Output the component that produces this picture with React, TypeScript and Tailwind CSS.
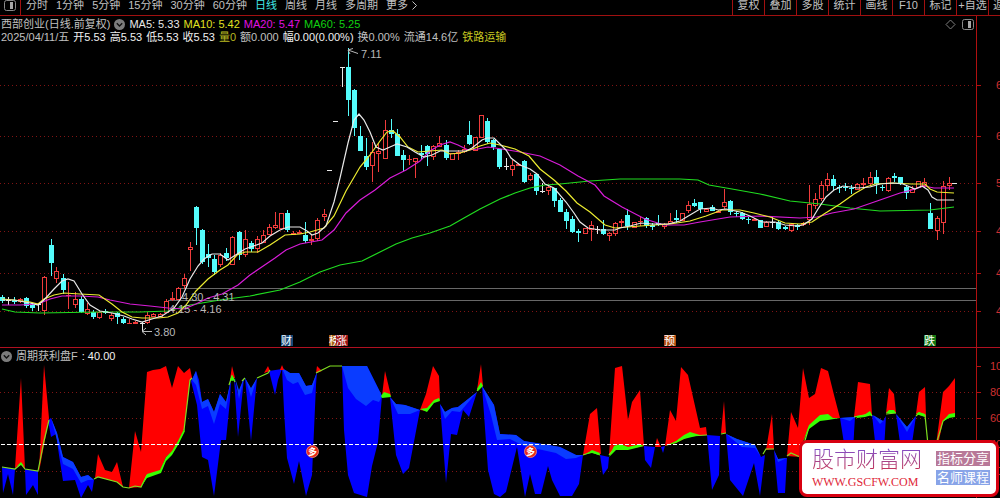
import React from "react";

type Kind = "u" | "d" | "w";
// x, high, body top, body bottom, low, kind (u = rise, d = fall, w = flat)
type Candle = [number, number, number, number, number, Kind];

const candles: Candle[] = [
  [2, 295, 297, 301, 303, "d"], [8, 297, 300, 301, 305, "w"], [14, 297, 300, 302, 304, "d"], [20, 298, 299, 302, 303, "u"],
  [26, 297, 298, 306, 308, "d"], [32, 303, 305, 308, 311, "d"], [38, 303, 304, 305, 311, "w"], [44, 276, 277, 311, 315, "u"],
  [51, 239, 245, 263, 276, "d"], [56, 267, 271, 279, 283, "u"], [63, 274, 278, 290, 294, "d"], [68, 282, 295, 296, 309, "u"],
  [75, 292, 299, 305, 308, "u"], [81, 296, 299, 312, 313, "d"], [87, 303, 309, 314, 315, "u"], [93, 310, 312, 317, 319, "d"],
  [99, 311, 312, 318, 319, "u"], [105, 309, 311, 313, 314, "d"], [111, 313, 315, 319, 321, "u"], [117, 312, 313, 317, 324, "d"],
  [123, 317, 319, 323, 324, "d"], [129, 319, 323, 324, 324, "u"], [135, 321, 322, 324, 324, "u"], [142, 322, 323, 324, 332, "w"],
  [147, 312, 315, 323, 324, "u"], [153, 313, 314, 317, 317, "u"], [160, 313, 314, 317, 317, "u"], [166, 299, 301, 313, 313, "u"],
  [172, 292, 298, 300, 301, "u"], [178, 287, 288, 300, 300, "u"], [184, 274, 278, 286, 289, "u"], [190, 242, 247, 250, 271, "u"],
  [196, 206, 207, 228, 245, "d"], [202, 229, 230, 262, 264, "d"], [208, 244, 254, 258, 267, "d"], [214, 255, 259, 272, 275, "d"],
  [220, 253, 255, 265, 267, "u"], [226, 248, 253, 258, 261, "d"], [232, 236, 237, 265, 265, "u"], [239, 231, 232, 255, 260, "d"],
  [245, 230, 239, 255, 257, "u"], [251, 241, 243, 249, 252, "d"], [257, 236, 239, 249, 253, "u"], [263, 230, 235, 243, 243, "u"],
  [269, 224, 227, 235, 235, "u"], [275, 212, 225, 228, 229, "u"], [281, 213, 213, 229, 229, "u"], [287, 210, 213, 230, 232, "d"],
  [293, 231, 233, 235, 235, "u"], [299, 230, 232, 234, 234, "u"], [305, 222, 235, 241, 243, "d"], [311, 235, 239, 241, 245, "u"],
  [317, 218, 220, 239, 241, "u"], [324, 209, 214, 217, 221, "u"], [329, 170, 170, 171, 171, "w"], [335, 121, 121, 122, 122, "w"],
  [342, 67, 67, 68, 87, "w"], [348, 48, 67, 100, 116, "d"], [354, 89, 90, 128, 136, "d"], [360, 126, 136, 151, 151, "d"],
  [366, 138, 156, 167, 170, "d"], [372, 142, 152, 166, 182, "u"], [378, 143, 151, 154, 172, "u"], [385, 120, 130, 159, 159, "u"],
  [391, 119, 130, 134, 138, "d"], [397, 129, 134, 156, 156, "d"], [403, 150, 155, 160, 171, "d"], [409, 155, 159, 160, 165, "u"],
  [415, 158, 158, 162, 178, "u"], [421, 145, 153, 155, 160, "d"], [427, 145, 146, 154, 166, "d"], [433, 145, 146, 157, 160, "u"],
  [439, 136, 143, 147, 147, "u"], [446, 140, 145, 158, 160, "d"], [452, 153, 153, 160, 160, "u"], [458, 150, 152, 154, 160, "u"],
  [464, 145, 149, 152, 153, "u"], [469, 121, 135, 144, 145, "d"], [475, 137, 137, 151, 151, "u"], [481, 115, 115, 138, 138, "u"],
  [487, 118, 121, 142, 144, "d"], [493, 139, 140, 147, 150, "d"], [499, 149, 149, 167, 169, "d"], [506, 158, 166, 167, 170, "w"],
  [512, 160, 165, 170, 176, "u"], [518, 163, 164, 166, 166, "u"], [524, 160, 161, 182, 183, "d"], [530, 173, 175, 180, 181, "u"],
  [536, 174, 174, 191, 195, "d"], [542, 183, 191, 192, 193, "w"], [548, 186, 187, 191, 195, "u"], [554, 188, 188, 201, 207, "d"],
  [560, 198, 200, 212, 212, "d"], [566, 209, 212, 221, 229, "d"], [572, 216, 219, 232, 233, "d"], [578, 229, 231, 233, 242, "d"],
  [585, 228, 228, 234, 234, "u"], [591, 221, 225, 230, 241, "u"], [597, 226, 229, 230, 234, "w"], [603, 220, 229, 234, 235, "d"],
  [609, 232, 233, 236, 241, "u"], [615, 222, 223, 234, 236, "u"], [621, 219, 221, 223, 228, "u"], [627, 209, 215, 226, 230, "d"],
  [634, 222, 222, 228, 228, "u"], [640, 217, 221, 222, 226, "u"], [646, 217, 218, 226, 228, "d"], [652, 223, 225, 227, 230, "d"],
  [658, 215, 223, 225, 226, "d"], [664, 223, 224, 227, 229, "u"], [670, 213, 221, 224, 224, "u"], [676, 210, 218, 220, 223, "d"],
  [682, 213, 213, 221, 221, "u"], [688, 201, 205, 211, 213, "u"], [694, 199, 203, 206, 207, "d"], [700, 202, 202, 209, 213, "d"],
  [706, 208, 209, 212, 212, "u"], [712, 205, 207, 211, 211, "d"], [718, 210, 211, 213, 213, "u"], [724, 189, 202, 207, 209, "u"],
  [730, 200, 201, 212, 215, "d"], [736, 211, 213, 214, 217, "d"], [742, 212, 213, 219, 220, "d"], [748, 217, 219, 220, 224, "d"],
  [754, 218, 219, 221, 221, "u"], [760, 220, 220, 228, 228, "d"], [766, 221, 222, 227, 227, "u"], [772, 217, 222, 223, 228, "w"],
  [778, 220, 222, 229, 230, "d"], [785, 226, 227, 229, 230, "d"], [791, 223, 224, 231, 232, "u"], [797, 224, 225, 227, 230, "d"],
  [803, 222, 223, 225, 226, "u"], [809, 185, 204, 220, 225, "u"], [815, 193, 199, 206, 209, "u"], [821, 181, 185, 199, 201, "u"],
  [827, 173, 179, 186, 191, "u"], [833, 175, 179, 186, 191, "d"], [839, 185, 187, 188, 193, "d"], [845, 183, 187, 188, 191, "d"],
  [851, 185, 188, 189, 194, "d"], [857, 183, 184, 190, 190, "u"], [863, 178, 183, 185, 189, "u"], [870, 172, 177, 184, 185, "u"],
  [876, 170, 177, 184, 194, "d"], [882, 185, 187, 188, 191, "d"], [888, 177, 178, 191, 192, "u"], [894, 173, 176, 178, 182, "d"],
  [900, 177, 177, 184, 185, "d"], [906, 186, 187, 193, 199, "d"], [912, 186, 189, 193, 193, "u"], [918, 181, 181, 188, 188, "u"],
  [924, 178, 182, 186, 187, "u"], [930, 203, 213, 229, 229, "d"], [937, 216, 218, 231, 240, "u"], [943, 181, 186, 223, 234, "u"],
  [949, 177, 183, 186, 190, "u"], [954, 183, 183, 184, 184, "w"],
];

const averages = [
  {
    color: "#20dc20",
    points:
      "2,309 15,312 40,313 100,312 140,312 168,311 190,305 220,300 250,296 280,290 300,282 320,272 340,265 362,261 380,252 396,244 412,238 430,233 450,226 464,218 480,209 500,199 515,193 530,188 545,185 560,184 590,181 620,179 680,179 698,180 709,185 732,189 760,194 790,201 820,204 850,208 880,211 930,210 954,207",
  },
  {
    color: "#d81cd8",
    points:
      "2,305 20,305 38,304 50,299 62,296 80,296 98,297 110,300 130,304 150,306 168,308 184,309 196,304 208,298 222,294 238,285 250,275 275,258 286,250 300,244 322,240 334,230 346,213 360,200 375,190 390,178 406,170 420,161 430,151 440,145 450,142 458,145 468,150 478,149 488,147 502,149 520,152 540,156 560,165 578,176 595,185 604,196 622,207 645,219 664,225 684,225 700,222 730,217 760,216 800,218 817,217 832,213 854,209 880,200 900,193 912,190 924,186 934,188 954,188",
  },
  {
    color: "#ecec30",
    points:
      "2,299 14,300 30,302 38,304 44,299 54,295 64,293 80,294 99,295 112,304 122,312 132,317 142,318 158,318 168,317 178,313 186,305 196,291 208,279 220,270 228,265 237,255 245,252 258,252 270,245 285,235 300,234 310,232 324,228 334,216 346,191 360,167 370,155 380,141 387,132 393,131 400,137 408,147 418,152 430,151 442,150 450,154 460,153 470,150 480,146 490,143 500,145 515,149 529,156 540,169 554,180 566,191 577,203 590,212 605,225 615,228 640,226 670,224 690,221 706,216 722,210 740,210 754,213 770,217 785,223 800,224 812,222 824,214 840,204 854,194 866,187 875,184 893,183 912,184 925,184 930,189 937,192 954,193",
  },
  {
    color: "#e8e8e8",
    points:
      "2,300 14,300 30,303 38,305 44,300 54,289 62,281 68,279 74,281 82,294 90,305 100,311 112,313 124,316 132,319 142,322 152,319 162,316 168,312 174,308 182,297 190,279 198,266 204,259 212,254 220,254 228,260 234,256 245,249 262,243 270,236 280,230 288,227 300,227 307,231 312,235 318,233 326,226 334,202 340,178 348,143 354,120 359,114 364,120 370,132 376,147 383,150 390,147 397,144 407,147 415,152 424,157 432,155 440,151 450,151 466,151 472,148 482,140 487,138 494,138 506,150 511,158 520,165 530,169 537,174 545,184 554,188 566,202 574,213 580,222 588,228 600,230 615,230 620,228 630,226 641,223 652,224 668,224 680,221 690,215 700,209 712,208 718,210 726,209 740,212 750,216 762,222 775,222 785,225 797,226 803,225 812,219 818,209 826,197 834,190 843,186 858,188 870,187 880,184 893,183 903,184 915,189 922,186 928,190 932,197 937,200 954,200",
  },
];

const redAreas = [
  "15,468 21,378 25,469 21,464",
  "39,472 44,365 49,418 44,445",
  "95,478 98,454 105,470 112,472 117,462 123,487 117,482 98,477",
  "129,488 135,431 141,452 147,372 153,370 160,369 166,366 172,388 178,366 184,373 190,368 192,378 190,380 184,430 178,442 172,452 166,457 160,471 147,475 141,487",
  "230,380 232,366 235,378",
  "264,373 268,366 270,371",
  "280,370 282,365 284,370",
  "316,373 317,366 322,371",
  "382,396 385,371 391,396",
  "420,410 426,394 433,366 439,376 440,400 434,402 427,411",
  "477,390 481,364 483,386",
  "583,455 590,414 597,408 601,454 592,452",
  "609,455 615,368 622,366 628,420 632,402 640,390 644,446 628,449 618,447",
  "655,447 657,438 661,447",
  "665,446 670,410 676,421 681,367 688,375 700,428 706,427 707,435 690,436 676,443",
  "721,433 724,401 726,433",
  "766,450 772,414 774,449",
  "787,456 791,412 798,428 803,368 809,398 815,394 821,368 828,371 834,395 840,418 828,418 820,420 809,427 803,442 800,457",
  "854,417 858,382 864,383 870,384 872,415 862,416",
  "886,413 889,388 894,394 896,413",
  "916,414 919,392 925,387 926,417",
  "936,445 943,392 949,386 955,378 955,415 949,416 943,421 938,445",
];

const blueAreas = [
  "2,467 15,469 13,495 8,474 3,493",
  "25,469 38,471 38,495 33,485 26,495",
  "48,420 51,418 57,433 63,457 73,462 81,477 88,475 94,480 92,492 88,485 81,498 75,480 63,481 59,455 56,434 51,437",
  "191,381 196,371 199,380 202,402 208,399 214,412 220,394 226,402 231,380 230,400 226,440 221,440 214,496 208,460 202,457 197,405",
  "234,378 238,394 244,378 238,437",
  "245,378 251,389 257,378 251,441",
  "269,371 282,369 278,380 275,395",
  "282,368 290,373 299,373 306,386 312,385 317,372 316,385 314,430 312,475 306,496 299,461 294,484 287,458 284,410",
  "342,366 367,366 382,396 378,442 372,466 367,497 354,493 348,475 344,430",
  "390,397 396,404 405,405 420,410 409,468 403,474 396,455",
  "440,404 445,412 452,408 458,407 477,392 469,417 463,410 457,435 451,434 446,483",
  "482,386 494,405 500,434 516,435 524,441 560,447 576,455 583,455 579,484 572,496 560,496 552,480 548,466 541,494 535,494 530,474 525,497 517,447 506,492 500,497 494,494 488,470",
  "600,455 609,457 608,468 603,475",
  "644,446 655,447 651,468 645,460",
  "661,447 665,446 663,453",
  "707,435 720,436 719,475 712,490",
  "726,434 737,439 755,445 761,457 765,455 760,496 754,463 743,496 730,480",
  "774,450 778,459 787,458 785,493 778,493",
  "840,418 855,417 853,450 845,450",
  "872,415 883,421 886,416 884,450 876,450",
  "896,414 907,427 916,416 911,450 901,450",
];

const lightAreas = [
  "51,418 57,433 63,457 73,462 81,477 88,475 94,480 88,480 81,483 73,469 63,464 57,440",
  "192,380 196,371 202,402 208,399 214,412 220,394 226,402 231,380 226,409 220,404 214,424 208,406 202,409 196,385",
  "235,378 239,390 244,378 239,399",
  "245,378 251,388 257,378 251,397",
  "282,368 290,373 299,373 306,386 312,385 317,372 312,393 305,395 298,382 293,384 287,380",
  "342,366 367,366 382,396 379,402 373,400 366,406 356,399 348,388",
  "390,397 396,404 405,405 420,410 410,414 398,414",
  "440,404 445,412 452,408 458,407 477,392 460,412 452,411 445,419",
  "482,386 494,405 500,434 516,435 524,441 560,447 576,455 583,455 576,458 566,459 556,453 524,446 510,439 497,440 491,415",
  "726,434 737,439 755,445 761,457 755,448 742,447",
  "774,450 778,459 787,458 778,462",
  "840,418 855,417 850,421",
  "873,415 883,421 880,424",
  "896,414 907,427 916,416 907,432",
];

const thinLines = [
  "2,467 15,469 21,464 25,469 38,471 44,441 49,420",
  "94,479 98,477 117,482 123,487 129,488 135,486 141,487 147,475",
  "184,430 190,380 192,378",
  "229,385 232,376 235,382",
  "242,381 245,378",
  "257,378 268,373 270,370",
  "316,373 322,370 330,366 342,366",
  "477,391 481,386",
  "583,455 592,452 600,455",
  "609,455 614,449",
  "690,436 707,435",
  "721,434 726,433",
  "763,454 766,449 774,449",
  "787,456 791,453 800,457",
  "800,457 809,427",
  "854,417 870,414 872,416",
  "886,414 896,413",
  "916,416 919,413 925,415 928,445",
  "936,445 943,421 949,416",
];

const thickAreas = [
  "17,466 21,462 24,466 21,465",
  "141,487 147,474 160,470 166,457 172,451 178,441 184,429 185,431 178,445 172,455 166,461 161,473 147,478",
  "230,380 232,375 235,380 232,381",
  "381,396 384,392 390,394 391,397 382,398",
  "420,409 427,408 434,400 439,398 440,401 434,403 427,412",
  "477,389 481,382 483,386 478,391",
  "586,454 592,450 600,453 599,455 592,453",
  "609,457 614,446 620,444 628,447 640,444 644,446 628,450 616,450",
  "665,446 676,441 684,435 690,432 700,435 692,437 684,439 676,443",
  "803,442 809,425 820,415 828,414 833,418 840,418 828,420 820,421 809,429",
  "856,416 864,415 870,411 872,415 865,417 857,418",
  "886,413 889,410 894,410 896,413",
  "916,414 919,412 925,414 925,417 919,415",
  "942,422 949,414 955,413 955,417 949,418",
];

const periods = ["分时", "1分钟", "5分钟", "15分钟", "30分钟", "60分钟", "日线", "周线", "月线", "多周期"];
const tools = ["复权", "叠加", "多股", "统计", "画线", "F10", "标记", "+自选"];

const priceAxis: [number, string][] = [[85, "6"], [136, "6"], [183, "5"], [231, "4"], [273, "4"], [311, "4"]];
const levelAxis: [number, string][] = [[366, "100"], [392, "80"], [418, "60"], [444, "40"], [471, "20"]];

const tags = [
  { x: 281, text: "财", fill: "#184878" },
  { x: 329, text: "榜", fill: "#a85c10" },
  { x: 336, text: "涨", fill: "#a01414" },
  { x: 664, text: "预", fill: "#b04c10" },
  { x: 924, text: "跌", fill: "#147814" },
];

function PanelIcon() {
  return (
    <svg width="12" height="11" viewBox="0 0 12 11" aria-hidden="true" className="shrink-0">
      <rect x="0.5" y="0.5" width="11" height="10" rx="2" fill="none" stroke="#8a8a8a" />
      <rect x="6" y="2" width="3" height="7" fill="#a8a8a8" />
    </svg>
  );
}

function DropIcon() {
  return (
    <svg width="11" height="11" viewBox="0 0 11 11" aria-hidden="true">
      <circle cx="5.5" cy="5.5" r="5.5" fill="#7c7c7c" />
      <path d="M2.8 4.3 5.5 7 8.2 4.3" fill="none" stroke="#111" strokeWidth="1.4" />
    </svg>
  );
}

function CandleMark({ candle }: { candle: Candle }) {
  const [x, high, top, bottom, low, kind] = candle;
  const color = kind === "u" ? "#f03c3c" : kind === "d" ? "#54fcfc" : "#e8e8e8";
  const h = Math.max(bottom - top, 1);
  return (
    <g fill={color}>
      <rect x={x} y={high} width="1" height={Math.max(top - high, 0)} />
      <rect x={x} y={bottom} width="1" height={Math.max(low - bottom, 0)} />
      {kind === "u" && h > 1 ? (
        <rect x={x - 1.5} y={top + 0.5} width="4" height={h - 1} fill="none" stroke={color} />
      ) : (
        <rect x={x - 2} y={top} width="5" height={h} />
      )}
    </g>
  );
}

function Axis({ top, bottom, labels, x }: { top: number; bottom: number; labels: [number, string][]; x: number }) {
  return (
    <g>
      <rect x="976" y={top} width="1" height={bottom - top} fill="#b01010" />
      {labels.map(([y, text]) => (
        <g key={y}>
          <rect x="977" y={y} width="4" height="1" fill="#b01010" />
          <text x={x} y={y + 4} fontSize="11" fill="#d03030">{text}</text>
        </g>
      ))}
    </g>
  );
}

function PriceChart() {
  return (
    <svg viewBox="0 16 1000 331" className="col-start-1 row-start-1 block w-full" role="img" aria-label="日线">
      {priceAxis.map(([y]) => (
        <line key={y} x1="0" x2="976" y1={y + 0.5} y2={y + 0.5} stroke="#801414" strokeDasharray="1 3" />
      ))}
      <rect x="178" y="288" width="798" height="1" fill="#686868" />
      <rect x="168" y="300" width="808" height="1" fill="#686868" />
      {candles.map((c) => <CandleMark key={c[0]} candle={c} />)}
      {averages.map((a) => (
        <polyline key={a.color} points={a.points} fill="none" stroke={a.color} strokeWidth="1.2" />
      ))}
      <g fontSize="11" fill="#b8b8b8">
        <text x="182" y="301">4.30 - 4.31</text>
        <text x="169" y="313">4.15 - 4.16</text>
        <text x="154" y="336">3.80</text>
        <text x="361" y="58">7.11</text>
      </g>
      <path d="M142 331.5h10M146 328l-4 3.5 4 3.5M348 50l10 3.5M353 48.500l-5 1.500 2 4" fill="none" stroke="#b8b8b8" />
      {tags.map((t) => (
        <g key={t.text}>
          <rect x={t.x} y="335" width="12" height="11" fill={t.fill} />
          <text x={t.x} y="345" fontSize="11" fill="#fff">{t.text}</text>
        </g>
      ))}
      <Axis top={16} bottom={347} labels={priceAxis} x={996} />
    </svg>
  );
}

function ProfitChart() {
  return (
    <svg viewBox="0 348 1000 150" className="col-start-1 row-start-1 block w-full" role="img" aria-label="周期获利盘">
      {[392, 418, 471].map((y) => (
        <line key={y} x1="0" x2="976" y1={y + 0.5} y2={y + 0.5} stroke="#801414" strokeDasharray="1 3" />
      ))}
      {blueAreas.map((p) => <polygon key={p} points={p} fill="#0000ff" />)}
      {lightAreas.map((p) => <polygon key={p} points={p} fill="#0a3cff" />)}
      {redAreas.map((p) => <polygon key={p} points={p} fill="#ff0000" />)}
      {thinLines.map((p) => <polyline key={p} points={p} fill="none" stroke="#80e020" strokeWidth="1.2" />)}
      {thickAreas.map((p) => <polygon key={p} points={p} fill="#38ff00" />)}
      <line x1="1" x2="976" y1="444.5" y2="444.5" stroke="#fff" strokeDasharray="4 2" />
      {[312.5, 530.5].map((x) => (
        <g key={x}>
          <circle cx={x} cy="451.500" r="6" fill="#e82818" stroke="#f89080" strokeWidth="0.8" />
          <text x={x} y="455" fontSize="9" fontWeight="700" fill="#fff" textAnchor="middle">多</text>
        </g>
      ))}
      <Axis top={348} bottom={498} labels={levelAxis} x={990} />
    </svg>
  );
}

export default function App() {
  return (
    <div className="relative overflow-hidden bg-black font-['Liberation_Sans','Noto_Sans_CJK_SC',sans-serif] text-[11px] leading-[13px] text-[#c0c0c0]">
      <header className="flex h-4 overflow-hidden border-b border-[#a01010] leading-[11px] whitespace-nowrap">
        <button className="flex w-[21px] shrink-0 items-start border-r border-[#a01010] pl-1" aria-label="面板">
          <PanelIcon />
        </button>
        <nav className="flex flex-1 items-start gap-2 pl-[5px]">
          {periods.map((p) => (
            <button key={p} className={p === "日线" ? "text-[#40e8e8]" : ""}>{p}</button>
          ))}
          <button className="flex items-center gap-1">
            更多
            <svg width="5" height="9" viewBox="0 0 5 9" aria-hidden="true">
              <path d="M0.500 0.500 4.500 4.500 0.500 8.500" fill="none" stroke="#c0c0c0" />
            </svg>
          </button>
        </nav>
        <div className="flex items-stretch">
          {tools.map((t) => (
            <button key={t} className="flex w-8 items-start justify-center border-l border-[#a01010]">{t}</button>
          ))}
          <button className="flex w-3 items-start overflow-hidden border-l border-[#a01010] pl-1">返</button>
        </div>
      </header>

      <section className="grid border-b border-[#b01020]">
        <PriceChart />
        <div className="col-start-1 row-start-1 flex items-start justify-between pt-0.5 pr-[26px] pl-px whitespace-nowrap">
          <div>
            <div className="flex items-center gap-1">
              <h1>西部创业(日线.前复权)</h1>
              <button aria-label="更多指标"><DropIcon /></button>
              <span className="text-[#e8e8e8]">MA5: 5.33</span>
              <span className="text-[#e0e020]">MA10: 5.42</span>
              <span className="text-[#e010e0]">MA20: 5.47</span>
              <span className="text-[#10d010]">MA60: 5.25</span>
            </div>
            <div className="flex gap-1">
              <span>2025/04/11/五</span>
              <span className="text-[#f0f0f0]">开5.53</span>
              <span className="text-[#f0f0f0]">高5.53</span>
              <span className="text-[#f0f0f0]">低5.53</span>
              <span className="text-[#f0f0f0]">收5.53</span>
              <span className="text-[#b8b820]">量0</span>
              <span>额0.000</span>
              <span className="text-[#f0f0f0]">幅0.00(0.00%)</span>
              <span>换0.00%</span>
              <span>流通14.6亿</span>
              <span className="text-[#c8c820]">铁路运输</span>
            </div>
          </div>
          <div className="flex items-center gap-1.5 pt-px">
            <svg width="11" height="11" viewBox="0 0 11 11" aria-hidden="true">
              <path d="M5.500 1 10 5.500 5.500 10 1 5.500Z" fill="none" stroke="#808080" />
            </svg>
            <button aria-label="侧栏"><PanelIcon /></button>
          </div>
        </div>
      </section>

      <section className="grid">
        <ProfitChart />
        <div className="col-start-1 row-start-1 flex h-4 items-center gap-1 pl-px whitespace-nowrap">
          <button aria-label="更多"><DropIcon /></button>
          <h2>周期获利盘F</h2>
          <span className="text-[#f0f0f0]">: 40.00</span>
        </div>
      </section>

      <a
        href="#"
        className="absolute right-px bottom-px flex items-center gap-3.5 rounded-lg border-[3px] border-[#d80010] bg-white pt-[3px] pr-1.5 pb-1 pl-2.5"
      >
        <span className="flex flex-col">
          <span className="bg-gradient-to-b from-[#7848d8] to-[#d01838] bg-clip-text text-[22px] leading-7 font-light text-transparent">
            股市财富网
          </span>
          <span className="font-['Liberation_Serif',serif] text-[12px] leading-4 text-[#e02838]">WWW.GSCFW.COM</span>
        </span>
        <span className="flex flex-col gap-1 text-[13px] leading-[15px] text-white">
          <span className="bg-[#b87898] px-px">指标分享</span>
          <span className="bg-[#88a4e8] px-px">名师课程</span>
        </span>
      </a>
    </div>
  );
}
